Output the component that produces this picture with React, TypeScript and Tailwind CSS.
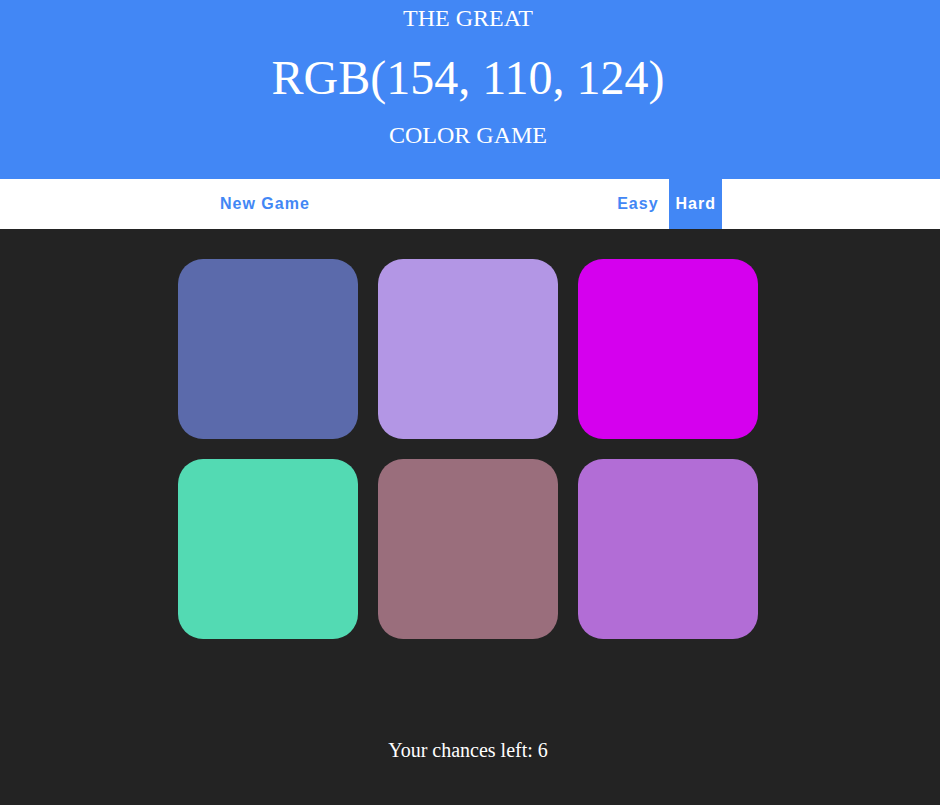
const colors = [
  "rgb(91, 106, 171)",
  "rgb(179, 150, 229)",
  "rgb(213, 0, 238)",
  "rgb(83, 218, 179)",
  "rgb(154, 110, 124)",
  "rgb(178, 109, 214)",
];

export default function App() {
  return (
    <div className="min-h-screen bg-[#232323] font-['Liberation_Serif',serif]">
      <div className="bg-[#4287f5] text-white">
        <div className="w-[936px] text-center pt-[6px] pb-[32px]">
          <h1 className="text-[24px] leading-[24px]">THE GREAT</h1>
          <h1 className="mt-[24px] text-[48px] leading-[48px]">RGB(154, 110, 124)</h1>
          <h1 className="mt-[21px] text-[24px] leading-[24px]">COLOR GAME</h1>
        </div>
      </div>

      <div className="bg-white">
        <div className="w-[936px]">
          <div className="w-[600px] mx-auto flex h-[50px] font-['Liberation_Sans',Arial,sans-serif] font-bold text-[16px] tracking-[1px]">
            <button className="ml-[46px] px-[6px] text-[#4287f5]">New Game</button>
            <div className="flex-1" />
            <button className="mr-[4px] px-[6px] text-[#4287f5]">Easy</button>
            <button className="mr-[46px] pl-[7px] pr-[6px] bg-[#4287f5] text-white">Hard</button>
          </div>
        </div>
      </div>

      <div className="w-[936px] pt-[30px]">
        <div className="w-[580px] mx-auto grid grid-cols-3 gap-[20px]">
          {colors.map((c, i) => (
            <div
              key={i}
              className="h-[180px] rounded-[25px]"
              style={{ backgroundColor: c }}
            />
          ))}
        </div>
        <p className="mt-[101px] text-center text-white text-[20px] leading-[20px]">
          Your chances left: 6
        </p>
      </div>
    </div>
  );
}
